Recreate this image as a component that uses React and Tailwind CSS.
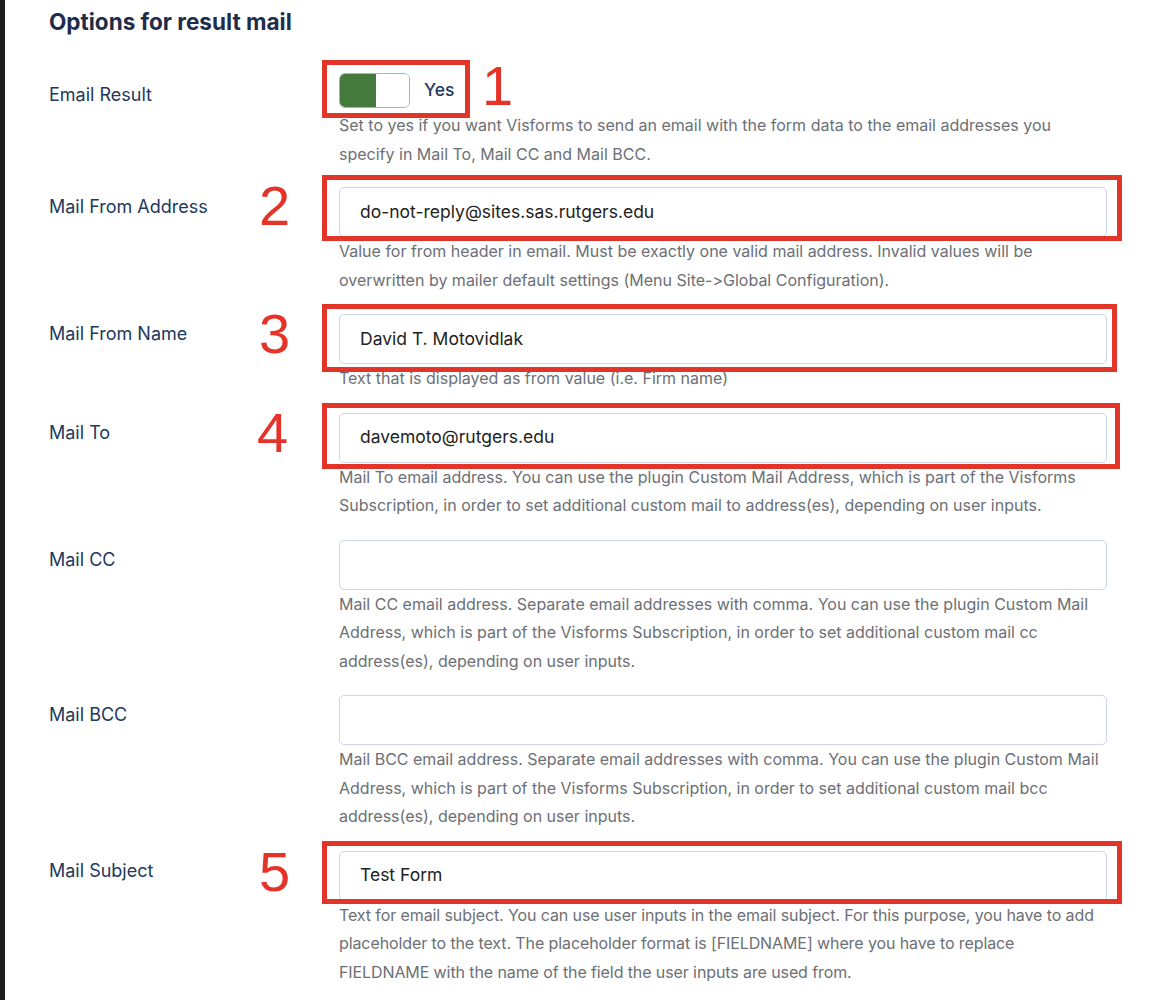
import React from "react";

const Num = ({ n, className }) => (
  <span
    className={
      "absolute text-[56px] leading-none text-[#e5332a] select-none " + className
    }
    style={{ fontFamily: '"Liberation Sans", Arial, sans-serif' }}
  >
    {n}
  </span>
);

const Box = ({ className }) => (
  <div className={"absolute border-[5px] border-[#e3342a] pointer-events-none " + className} />
);

const Help = ({ children, tight }) => (
  <p
    className={
      "text-[16px] leading-[28.5px] text-[#6c7075] [font-feature-settings:'calt'_0] " +
      (tight ? "pr-0 tracking-[-0.1px]" : "pr-[8px]")
    }
  >
    {children}
  </p>
);

const Input = ({ value }) => (
  <div className="h-[50px] w-full rounded-[5px] border border-[#cdd6e6] bg-white flex items-center pl-[20px] text-[17.5px] text-[#222]">
    {value}
  </div>
);

const Row = ({ label, children }) => (
  <div className="flex mb-[20px]">
    <div className="w-[290px] shrink-0 pt-[8px] text-[18px] leading-[24px] text-[#22385e]">{label}</div>
    <div className="w-[768px] shrink-0">{children}</div>
  </div>
);

export default function App() {
  return (
    <div
      className="min-h-[1000px] bg-white border-l-[5px] border-[#1c1c1c] pl-[44px] pt-[8px] overflow-hidden"
      style={{ fontFamily: 'Inter, Roboto, "Noto Sans", sans-serif' }}
    >
      <h2 className="text-[22.5px] leading-[28px] font-bold text-[#1f2d4a] mb-[37px]">
        Options for result mail
      </h2>

      <div className="flex mb-[19px]">
        <div className="w-[290px] shrink-0 pt-[10px] text-[18px] leading-[24px] text-[#22385e]">Email Result</div>
        <div className="w-[768px] shrink-0">
          <div className="relative flex items-center h-[35px] mb-[3px]">
            <div className="flex h-[35px] w-[71px] rounded-[6px] border border-[#9fbf9a] overflow-hidden">
              <div className="w-[36px] h-full bg-[#447a3b]" />
              <div className="flex-1 bg-white" />
            </div>
            <span className="ml-[14px] text-[17.5px] font-medium text-[#22385e]">Yes</span>
            <Box className="left-[-17px] top-[-13px] w-[148px] h-[58px]" />
            <Num n="1" className="left-[143px] top-[-15px]" />
          </div>
          <Help>
            Set to yes if you want Visforms to send an email with the form data to the email addresses you specify in Mail To, Mail CC and Mail BCC.
          </Help>
        </div>
      </div>

      <Row label="Mail From Address">
        <div className="relative">
          <Input value="do-not-reply@sites.sas.rutgers.edu" />
          <Box className="left-[-17px] top-[-12px] right-[-15px] bottom-[-4px]" />
          <Num n="2" className="left-[-80px] top-[-9px]" />
        </div>
        <Help>
          Value for from header in email. Must be exactly one valid mail address. Invalid values will be overwritten by mailer default settings (Menu Site-&gt;Global Configuration).
        </Help>
      </Row>

      <Row label="Mail From Name">
        <div className="relative">
          <Input value="David T. Motovidlak" />
          <Box className="left-[-17px] top-[-10px] right-[-10px] bottom-[-8px]" />
          <Num n="3" className="left-[-80px] top-[-8px]" />
        </div>
        <Help>Text that is displayed as from value (i.e. Firm name)</Help>
      </Row>

      <Row label="Mail To">
        <div className="relative">
          <Input value="davemoto@rutgers.edu" />
          <Box className="left-[-17px] top-[-10px] right-[-13px] bottom-[-6px]" />
          <Num n="4" className="left-[-82px] top-[-8px]" />
        </div>
        <Help>
          Mail To email address. You can use the plugin Custom Mail Address, which is part of the Visforms Subscription, in order to set additional custom mail to address(es), depending on user inputs.
        </Help>
      </Row>

      <Row label="Mail CC">
        <Input value="" />
        <Help>
          Mail CC email address. Separate email addresses with comma. You can use the plugin Custom Mail Address, which is part of the Visforms Subscription, in order to set additional custom mail cc address(es), depending on user inputs.
        </Help>
      </Row>

      <Row label="Mail BCC">
        <Input value="" />
        <Help>
          Mail BCC email address. Separate email addresses with comma. You can use the plugin Custom Mail Address, which is part of the Visforms Subscription, in order to set additional custom mail bcc address(es), depending on user inputs.
        </Help>
      </Row>

      <Row label="Mail Subject">
        <div className="relative">
          <Input value="Test Form" />
          <Box className="left-[-17px] top-[-10px] right-[-15px] bottom-[-3px]" />
          <Num n="5" className="left-[-80px] top-[-7px]" />
        </div>
        <Help tight>
          Text for email subject. You can use user inputs in the email subject. For this purpose, you have to add placeholder to the text. The placeholder format is [FIELDNAME] where you have to replace FIELDNAME with the name of the field the user inputs are used from.
        </Help>
      </Row>
    </div>
  );
}
